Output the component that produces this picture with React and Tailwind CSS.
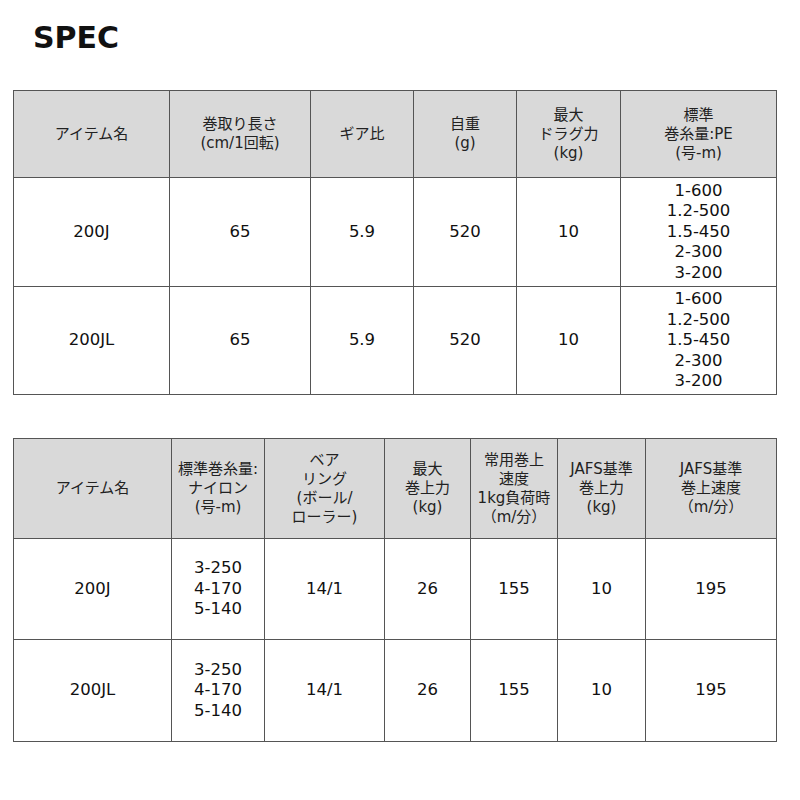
const font = { fontFamily: '"DejaVu Sans", Verdana, "Noto Sans CJK JP", sans-serif' };

const spec1 = {
  cols: [156, 141, 103, 103, 104, 156],
  head: [
    ['アイテム名'],
    ['巻取り長さ', '(cm/1回転)'],
    ['ギア比'],
    ['自重', '(g)'],
    ['最大', 'ドラグ力', '(kg)'],
    ['標準', '巻糸量:PE', '(号-m)'],
  ],
  headH: 'h-[87px]',
  rows: [
    { h: 'h-[109px]', cells: [['200J'], ['65'], ['5.9'], ['520'], ['10'], ['1-600', '1.2-500', '1.5-450', '2-300', '3-200']] },
    { h: 'h-[108px]', cells: [['200JL'], ['65'], ['5.9'], ['520'], ['10'], ['1-600', '1.2-500', '1.5-450', '2-300', '3-200']] },
  ],
};

const spec2 = {
  cols: [158, 93, 120, 86, 87, 88, 131],
  head: [
    ['アイテム名'],
    ['標準巻糸量:', 'ナイロン', '(号-m)'],
    ['ベア', 'リング', '(ボール/', 'ローラー)'],
    ['最大', '巻上力', '(kg)'],
    ['常用巻上', '速度', '1kg負荷時', '（m/分）'],
    ['JAFS基準', '巻上力', '(kg)'],
    ['JAFS基準', '巻上速度', '（m/分）'],
  ],
  headH: 'h-[100px]',
  rows: [
    { h: 'h-[101px]', cells: [['200J'], ['3-250', '4-170', '5-140'], ['14/1'], ['26'], ['155'], ['10'], ['195']] },
    { h: 'h-[102px]', cells: [['200JL'], ['3-250', '4-170', '5-140'], ['14/1'], ['26'], ['155'], ['10'], ['195']] },
  ],
};

function SpecTable({ data }) {
  return (
    <table className="table-fixed border-collapse w-[763px]">
      <colgroup>
        {data.cols.map((w, i) => (
          <col key={i} style={{ width: w }} />
        ))}
      </colgroup>
      <thead>
        <tr className={data.headH}>
          {data.head.map((lines, i) => (
            <th key={i} className="border border-[#555] bg-[#d9d9d9] p-0 text-center align-middle font-normal text-[15px] leading-[19px] text-[#222]">
              {lines.map((l, j) => (
                <div key={j}>{l}</div>
              ))}
            </th>
          ))}
        </tr>
      </thead>
      <tbody>
        {data.rows.map((row, r) => (
          <tr key={r} className={row.h}>
            {row.cells.map((lines, i) => (
              <td key={i} className="border border-[#555] p-0 text-center align-middle text-[16.5px] leading-[20.5px] text-[#111]">
                {lines.map((l, j) => (
                  <div key={j}>{l}</div>
                ))}
              </td>
            ))}
          </tr>
        ))}
      </tbody>
    </table>
  );
}

export default function App() {
  return (
    <div className="w-[800px] h-[800px] bg-white pl-[13px]" style={font}>
      <h1 className="pl-[20px] pt-[18px] h-[90px] text-[30px] leading-[40px] font-bold text-[#111]">SPEC</h1>
      <SpecTable data={spec1} />
      <div className="h-[43px]" />
      <SpecTable data={spec2} />
    </div>
  );
}
